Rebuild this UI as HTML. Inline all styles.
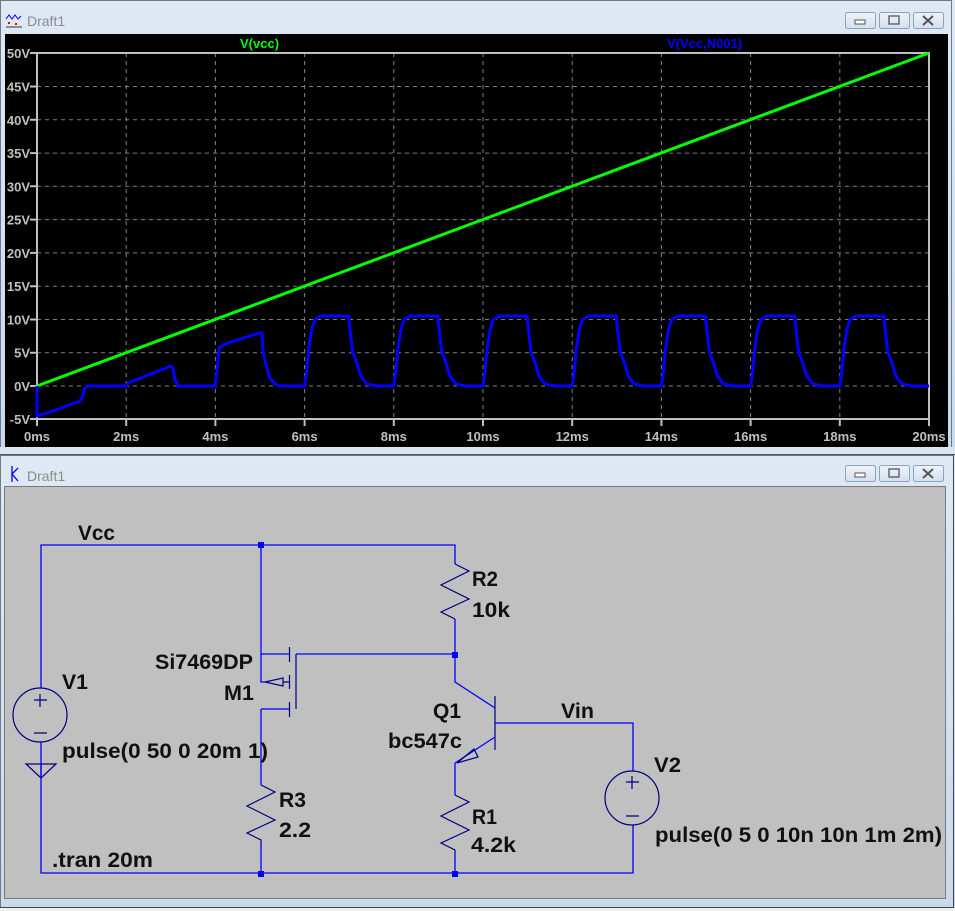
<!DOCTYPE html>
<html><head><meta charset="utf-8"><style>
html,body{margin:0;padding:0;background:#f0f0f0;width:955px;height:911px;overflow:hidden}
svg{display:block}
.ax{font:bold 13px "Liberation Sans",sans-serif;fill:#c0c0c0}
.t{font:bold 21px "Liberation Sans",sans-serif;fill:#101010}
</style></head><body>
<svg width="955" height="911" viewBox="0 0 955 911" xmlns="http://www.w3.org/2000/svg">
<defs>
<linearGradient id="tb" x1="0" y1="0" x2="0" y2="1"><stop offset="0" stop-color="#dfe9f5"/><stop offset="1" stop-color="#c9d9ec"/></linearGradient>
<linearGradient id="bt" x1="0" y1="0" x2="0" y2="1"><stop offset="0" stop-color="#eef3f9"/><stop offset="1" stop-color="#d3dfee"/></linearGradient>
</defs>
<rect x="0" y="0" width="955" height="454" fill="url(#tb)"/>
<rect x="0.5" y="0.5" width="951" height="452" fill="none" stroke="#6f7a86"/>
<rect x="0" y="447" width="955" height="7" fill="#dbe6f3"/>
<g transform="translate(6,13)">
<path d="M0,6 L3,2 L6,6 L9,2 L12,6 L15,3" fill="none" stroke="#0000ff" stroke-width="1"/>
<rect x="2" y="9" width="2" height="2" fill="#e00"/><rect x="9" y="10" width="2" height="2" fill="#e00"/>
<line x1="0" y1="14" x2="16" y2="14" stroke="#333"/>
</g>
<text x="27" y="26" style="font:14px 'Liberation Sans',sans-serif;fill:#8a8a8a">Draft1</text>
<g stroke="#8fa2b8" fill="url(#bt)">
<rect x="845.5" y="12.5" width="30" height="16" rx="2"/><rect x="879.5" y="12.5" width="30" height="16" rx="2"/><rect x="913.5" y="12.5" width="30" height="16" rx="2"/>
</g>
<rect x="855" y="20" width="10" height="4" fill="#fff" stroke="#555" stroke-width="1"/>
<rect x="889" y="16" width="10" height="8" fill="none" stroke="#555" stroke-width="1.3"/>
<path d="M923,16 L933,25 M933,16 L923,25" stroke="#555" stroke-width="2"/>
<rect x="5" y="34" width="943" height="413" fill="#000"/>
<g stroke="#808080" stroke-dasharray="4,4" stroke-width="1">
<path d="M126.2,53V419M215.4,53V419M304.6,53V419M393.8,53V419M483,53V419M572.2,53V419M661.4,53V419M750.6,53V419M839.8,53V419"/>
<path d="M37,86.5H929M37,119.8H929M37,153.1H929M37,186.3H929M37,219.6H929M37,252.9H929M37,286.2H929M37,319.5H929M37,352.7H929M37,386H929"/>
</g>
<rect x="37" y="53" width="892" height="366" fill="none" stroke="#c0c0c0" stroke-width="2"/>
<g stroke="#c0c0c0" stroke-width="2">
<path d="M30,53H37M30,86.5H37M30,119.8H37M30,153.1H37M30,186.3H37M30,219.6H37M30,252.9H37M30,286.2H37M30,319.5H37M30,352.7H37M30,386H37M30,419H37"/>
<path d="M37,419V426M126.2,419V426M215.4,419V426M304.6,419V426M393.8,419V426M483,419V426M572.2,419V426M661.4,419V426M750.6,419V426M839.8,419V426M929,419V426"/>
</g>
<g class="ax" text-anchor="end">
<text x="30" y="58">50V</text><text x="30" y="91.5">45V</text><text x="30" y="124.8">40V</text><text x="30" y="158">35V</text><text x="30" y="191.3">30V</text><text x="30" y="224.6">25V</text><text x="30" y="257.9">20V</text><text x="30" y="291.2">15V</text><text x="30" y="324.5">10V</text><text x="30" y="357.7">5V</text><text x="30" y="391">0V</text><text x="30" y="424">-5V</text>
</g>
<g class="ax" text-anchor="middle">
<text x="37" y="441">0ms</text><text x="126.2" y="441">2ms</text><text x="215.4" y="441">4ms</text><text x="304.6" y="441">6ms</text><text x="393.8" y="441">8ms</text><text x="483" y="441">10ms</text><text x="572.2" y="441">12ms</text><text x="661.4" y="441">14ms</text><text x="750.6" y="441">16ms</text><text x="839.8" y="441">18ms</text><text x="929" y="441">20ms</text>
</g>
<text x="240" y="48" style="font:bold 13px 'Liberation Sans',sans-serif;fill:#00ff00">V(vcc)</text>
<text x="667" y="48" style="font:bold 13px 'Liberation Sans',sans-serif;fill:#0000ff">V(Vcc,N001)</text>
<line x1="37" y1="386" x2="929" y2="53" stroke="#00ff00" stroke-width="3"/>
<path fill="none" stroke="#0000ff" stroke-width="3" stroke-linejoin="round" d="M37,386 L37,416 L50,412 L80,401 L82,398 L84,390 L87,386 L126,386 L128,383 L171,366 L173,368 L175,380 L178,386 L215,386 L217,372 L219,348 L225,344 L259,333 L262,333 L263,350 L266,365 L270,378 L275,384 L280,386
L304.6,386 306.6,372 308.6,350 311.6,330 314.6,320 320.6,316 348.6,316 350.6,335 352.6,352 356.6,362 360.6,376 366.6,384 376.6,386
L393.8,386 395.8,372 397.8,350 400.8,330 403.8,320 409.8,316 437.8,316 439.8,335 441.8,352 445.8,362 449.8,376 455.8,384 465.8,386
L483,386 485,372 487,350 490,330 493,320 499,316 527,316 529,335 531,352 535,362 539,376 545,384 555,386
L572.2,386 574.2,372 576.2,350 579.2,330 582.2,320 588.2,316 616.2,316 618.2,335 620.2,352 624.2,362 628.2,376 634.2,384 644.2,386
L661.4,386 663.4,372 665.4,350 668.4,330 671.4,320 677.4,316 705.4,316 707.4,335 709.4,352 713.4,362 717.4,376 723.4,384 733.4,386
L750.6,386 752.6,372 754.6,350 757.6,330 760.6,320 766.6,316 794.6,316 796.6,335 798.6,352 802.6,362 806.6,376 812.6,384 822.6,386
L839.8,386 841.8,372 843.8,350 846.8,330 849.8,320 855.8,316 883.8,316 885.8,335 887.8,352 891.8,362 895.8,376 901.8,384 911.8,386 L929,386"/>
<rect x="0" y="455" width="955" height="456" fill="url(#tb)"/>
<line x1="0" y1="454.5" x2="955" y2="454.5" stroke="#555"/>
<rect x="0.5" y="455.5" width="953" height="452" fill="none" stroke="#6f7a86"/>
<line x1="953.5" y1="455" x2="953.5" y2="908" stroke="#444"/>
<line x1="0" y1="907.5" x2="954" y2="907.5" stroke="#444"/>
<rect x="0" y="908" width="955" height="3" fill="#f0f0f0"/>
<g stroke="#0000ff" fill="none" stroke-width="1.3">
<path d="M12,466V482M12,474L18,468M12,474L18,481"/>
</g>
<text x="27" y="481" style="font:14px 'Liberation Sans',sans-serif;fill:#8a8a8a">Draft1</text>
<g stroke="#8fa2b8" fill="url(#bt)">
<rect x="845.5" y="465.5" width="30" height="16" rx="2"/><rect x="879.5" y="465.5" width="30" height="16" rx="2"/><rect x="913.5" y="465.5" width="30" height="16" rx="2"/>
</g>
<rect x="855" y="473" width="10" height="4" fill="#fff" stroke="#555" stroke-width="1"/>
<rect x="889" y="469" width="10" height="8" fill="none" stroke="#555" stroke-width="1.3"/>
<path d="M923,469 L933,478 M933,469 L923,478" stroke="#555" stroke-width="2"/>
<rect x="4.5" y="486.5" width="941" height="412" fill="#c0c0c0" stroke="#7a7a7a"/>
<g stroke="#0000ff" fill="none" stroke-width="1.3">
<path d="M41,688V545H455V564M455,619V682L495,708"/>
<path d="M41,742V873H633V825M633,771V723H495"/>
<path d="M261,545V682H265M290,654H261M296,654H455M261,709H290M261,709V785M261,845V873"/>
<path d="M455,763V795M455,855V873"/>
<path d="M495,737L455,763"/>
</g>
<g stroke="#000080" fill="none" stroke-width="1.2">
<path d="M455,564L469,571L441,585L469,599L441,612L455,619"/>
<path d="M261,785L275,792L247,806L275,820L247,833L261,840V845"/>
<path d="M455,795L469,802L441,816L469,830L441,843L455,850V855"/>
<circle cx="40" cy="715" r="27"/>
<circle cx="632" cy="798" r="27"/>
<path d="M34,700H47M40,694V707M34,733H47"/>
<path d="M626,782H639M632,776V789M626,816H639"/>
<path d="M26,764H56L41,778Z"/>
<path d="M289.5,647V662M289.5,675V689M289.5,702V717M296,654V709"/>
<path d="M495,696V750"/>
<path d="M265,682L283,678V686Z M283,682H290"/>
<path d="M457,763L474,749L478,757Z"/>
</g>
<line x1="41" y1="764" x2="41" y2="778" stroke="#0000ff" stroke-width="1.3"/>
<g fill="#0000ff">
<rect x="258" y="542" width="6" height="6"/><rect x="452" y="652" width="6" height="6"/><rect x="258" y="871" width="6" height="6"/><rect x="452" y="871" width="6" height="6"/>
</g>
<g class="t">
<text x="78" y="540" textLength="37" lengthAdjust="spacingAndGlyphs">Vcc</text>
<text x="472" y="586" textLength="26" lengthAdjust="spacingAndGlyphs">R2</text><text x="472" y="617" textLength="38" lengthAdjust="spacingAndGlyphs">10k</text>
<text x="155" y="669" textLength="98" lengthAdjust="spacingAndGlyphs">Si7469DP</text><text x="224" y="700" textLength="30" lengthAdjust="spacingAndGlyphs">M1</text>
<text x="62" y="689" textLength="26" lengthAdjust="spacingAndGlyphs">V1</text>
<text x="433" y="718" textLength="28" lengthAdjust="spacingAndGlyphs">Q1</text><text x="388" y="748" textLength="74" lengthAdjust="spacingAndGlyphs">bc547c</text>
<text x="561" y="718" textLength="33" lengthAdjust="spacingAndGlyphs">Vin</text>
<text x="654" y="772" textLength="27" lengthAdjust="spacingAndGlyphs">V2</text>
<text x="62" y="758" textLength="206" lengthAdjust="spacingAndGlyphs">pulse(0 50 0 20m 1)</text>
<text x="279" y="807" textLength="27" lengthAdjust="spacingAndGlyphs">R3</text><text x="279" y="837" textLength="32" lengthAdjust="spacingAndGlyphs">2.2</text>
<text x="472" y="824" textLength="25" lengthAdjust="spacingAndGlyphs">R1</text><text x="471" y="852" textLength="45" lengthAdjust="spacingAndGlyphs">4.2k</text>
<text x="52" y="867" textLength="101" lengthAdjust="spacingAndGlyphs">.tran 20m</text>
<text x="655" y="842" textLength="287" lengthAdjust="spacingAndGlyphs">pulse(0 5 0 10n 10n 1m 2m)</text>
</g>
</svg>
</body></html>
